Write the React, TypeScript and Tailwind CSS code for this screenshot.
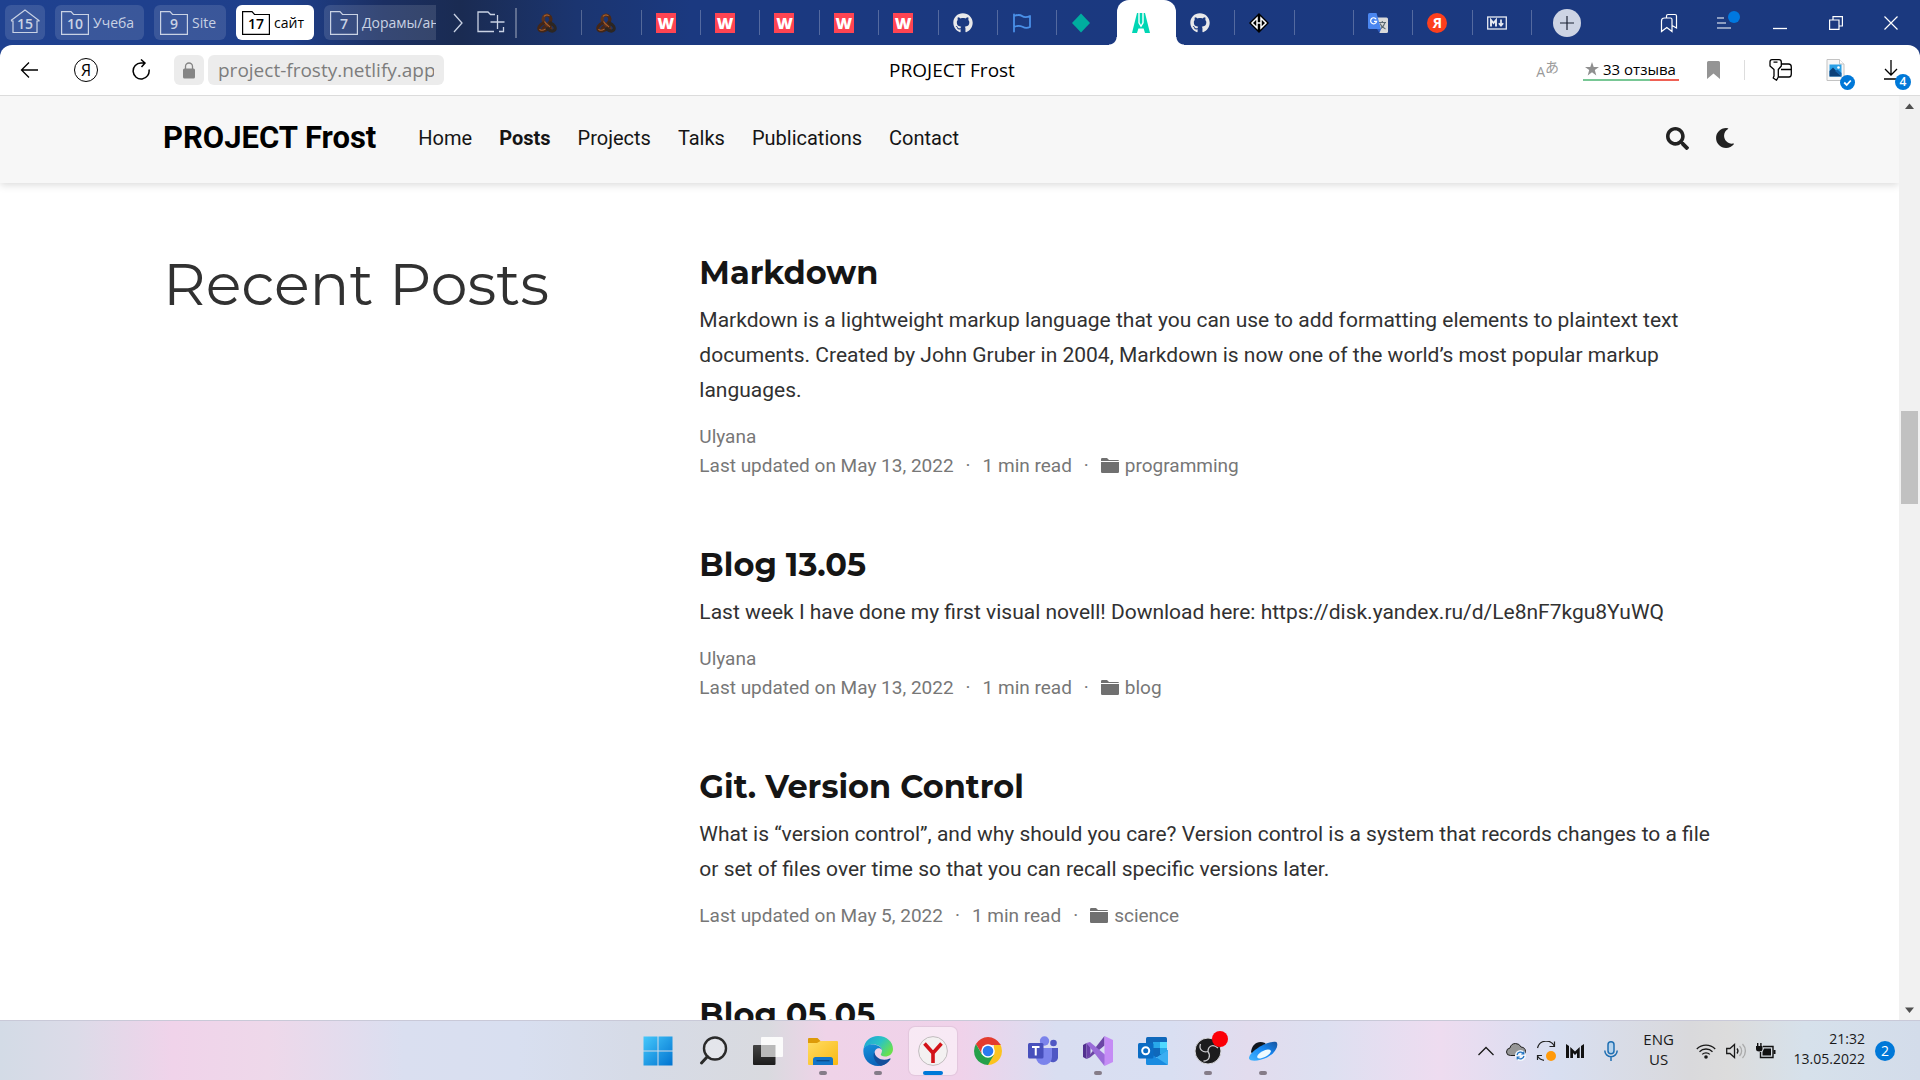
import React from "react";
import { FaGithub, FaMoon, FaSearch } from "react-icons/fa";

const UI = "font-['Open_Sans','Noto_Sans',sans-serif]";

/* ---------- favicons ---------- */

function Knot() {
  return (
    <svg viewBox="0 0 20 20" className="size-5" fill="none">
      <path d="M10 2C13 2 14.500 5 13.500 8C12.500 11 9 12.500 6 15.500" stroke="#4a2817" strokeWidth="3.200" strokeLinecap="round" />
      <path d="M10 2C7 2 5.500 5 6.500 8C7.500 11 11 12.500 14 15.500" stroke="#5c331e" strokeWidth="3.200" strokeLinecap="round" />
      <path d="M6.500 10C3 11.500 0.500 15 2.500 17.200C4.500 19 9 18 12 15C13 14 13.500 12 13 10" stroke="#442616" strokeWidth="3" strokeLinecap="round" />
      <path d="M13.500 10C17 11.500 19.500 15 17.500 17.200C15.500 19 13 18 10.500 16" stroke="#2c2622" strokeWidth="3" strokeLinecap="round" />
      <path d="M7 3.500C8 1.800 11 1.300 12.500 3M2.500 16C3.500 18 6 17.500 8.500 16M7.500 8.500C8.500 10.500 11 12 13 14" stroke="#a9602f" strokeWidth="1.100" />
    </svg>
  );
}

function WFavicon() {
  return (
    <span className="flex size-5 items-center justify-center bg-[#ff4452] text-base leading-5 font-extrabold text-white">W</span>
  );
}

function Flag() {
  return (
    <svg viewBox="0 0 20 20" className="size-5" fill="none" stroke="#4a90e8" strokeWidth="1.800" strokeLinejoin="round" strokeLinecap="round">
      <path d="M2 1.500V18.500M2 3C6 1.500 8 1.500 10 3C12 4.500 15 4.500 18 3V14C15 15.500 12.500 15 10.500 13.800C8 12.500 5 12.500 2 14" />
    </svg>
  );
}

function Diamond() {
  return (
    <svg viewBox="0 0 20 20" className="size-5">
      <path d="M10 0.500L19 10L10 19.500L1 10Z" fill="#00ad9f" />
    </svg>
  );
}

function FrostMark() {
  return (
    <svg viewBox="0 0 20 20" className="size-5">
      <path d="M6 0H14L19 20H14L12.600 15.500H7.400L6 20H1Z" fill="#00d6b4" />
      <path d="M7.300 0H8.700V9.500L10 12L11.300 9.500V0H12.700V10L10 14.500L7.300 10Z" fill="#fff" />
    </svg>
  );
}

function HDiamond() {
  return (
    <svg viewBox="0 0 20 20" className="size-5">
      <path d="M10 0L20 10L10 20L0 10Z" fill="#000" />
      <path d="M8 5V15L3 10ZM12 5V15L17 10Z" fill="none" stroke="#fff" strokeWidth="1.500" />
      <path d="M8 10H12" stroke="#fff" strokeWidth="1.500" />
    </svg>
  );
}

function Translate() {
  return (
    <svg viewBox="0 0 20 20" className="size-5">
      <path d="M8 4.500H18.500Q20 4.500 20 6V18.500Q20 20 18.500 20H11.500Z" fill="#dadada" />
      <path d="M10.500 9.500H18M14.300 8V9.500M17 9.500C16 13 14 14.500 12.500 16M12 10.500C13 13 15 15 17.500 16" fill="none" stroke="#5d6b74" strokeWidth="1.100" />
      <path d="M1.500 0H8.500L13 16H1.500Q0 16 0 14.500V1.500Q0 0 1.500 0Z" fill="#4a86f0" />
      <path d="M9 16H13L11.500 20Z" fill="#2f5fc4" />
      <path d="M8.200 6.200A3 3 0 1 0 8.600 8.300H6" fill="none" stroke="#fff" strokeWidth="1.200" />
    </svg>
  );
}

function YaFavicon() {
  return (
    <span className="flex size-5 items-center justify-center rounded-full bg-[#fc3f1d] text-sm leading-5 font-bold text-white">Я</span>
  );
}

function MdFavicon() {
  return (
    <svg viewBox="0 0 20 20" className="size-5" fill="none" stroke="#e8ebf2">
      <rect x="0.700" y="4" width="18.600" height="12" strokeWidth="1.300" />
      <path d="M4 13.500V7L6.500 10L9 7V13.500" strokeWidth="1.900" />
      <path d="M14 6.500V12.500M11.800 10.300L14 12.800L16.200 10.300" strokeWidth="1.700" />
    </svg>
  );
}

type Tab = { title: string; icon: React.ReactNode; active?: boolean; divider?: boolean };

const gh = <FaGithub className="size-5 text-[#e9e9ea]" />;

const tabs: Tab[] = [
  { title: "Knot", icon: <Knot />, divider: true },
  { title: "Knot 2", icon: <Knot />, divider: true },
  { title: "W 1", icon: <WFavicon />, divider: true },
  { title: "W 2", icon: <WFavicon />, divider: true },
  { title: "W 3", icon: <WFavicon />, divider: true },
  { title: "W 4", icon: <WFavicon />, divider: true },
  { title: "W 5", icon: <WFavicon />, divider: true },
  { title: "GitHub", icon: gh, divider: true },
  { title: "Flag", icon: <Flag />, divider: true },
  { title: "Netlify", icon: <Diamond /> },
  { title: "PROJECT Frost", icon: <FrostMark />, active: true },
  { title: "GitHub 2", icon: gh, divider: true },
  { title: "Hugo", icon: <HDiamond />, divider: true },
  { title: "New tab", icon: null, divider: true },
  { title: "Translate", icon: <Translate />, divider: true },
  { title: "Yandex", icon: <YaFavicon />, divider: true },
  { title: "Markdown", icon: <MdFavicon />, divider: true },
];

/* ---------- tab strip ---------- */

function FolderOutline({ count }: { count: string }) {
  return (
    <span className="relative flex h-6 w-7 shrink-0 items-center justify-center pt-0.5 text-sm leading-5 font-semibold">
      <svg viewBox="0 0 28 24" className="absolute inset-0 h-6 w-7" fill="none" stroke="currentColor" strokeWidth="1.200">
        <path d="M0.600 23.400V0.600H10L12.500 3.500H27.400V23.400Z" />
      </svg>
      {count}
    </span>
  );
}

function TabGroup({ count, label, width, active }: { count: string; label: string; width: string; active?: boolean }) {
  return (
    <button
      className={`flex h-[35px] shrink-0 items-center gap-1 overflow-hidden rounded-md pl-1.5 text-left text-sm whitespace-nowrap ${width} ${
        active ? "bg-white text-black" : "bg-white/12 text-[#c9d2e4]"
      }`}
    >
      <FolderOutline count={count} />
      <span>{label}</span>
    </button>
  );
}

function TabStrip() {
  return (
    <div className="flex h-[45px] shrink-0 items-stretch">
      <div className="flex shrink-0 items-center text-[#c9d2e4]">
        <button aria-label="Home, 15 tabs" className="relative ml-[5px] flex h-[35px] w-10 items-center justify-center rounded-md bg-white/12 pt-0.5 text-sm font-semibold">
          <svg viewBox="0 0 40 35" className="absolute inset-0 h-[35px] w-10" fill="none" stroke="currentColor" strokeWidth="1.200">
            <path d="M6 15.500L20 5L34 15.500V16H32V27.500H8V16H6" />
          </svg>
          15
        </button>
        <div className="ml-2.5 flex gap-2.5">
          <TabGroup count="10" label="Учеба" width="w-[89px]" />
          <TabGroup count="9" label="Site" width="w-[72px]" />
          <TabGroup count="17" label="сайт" width="w-[78px]" active />
          <TabGroup count="7" label="Дорамы/аниме" width="w-[112px] rounded-r-none" />
        </div>
        <button aria-label="More groups" className="ml-[17px]">
          <svg viewBox="0 0 10 20" className="h-5 w-2.5" fill="none" stroke="currentColor" strokeWidth="1.300"><path d="M1 1L9 10L1 19" /></svg>
        </button>
        <button aria-label="New group" className="ml-3.5">
          <svg viewBox="0 0 28 24" className="h-6 w-7" fill="none" stroke="currentColor" strokeWidth="1.300">
            <path d="M18 3.500H13.500L11 1H1V20.500H17M26.500 16V20.500H22M20.500 4V18M13.500 11H27.500" />
          </svg>
        </button>
        <span className="ml-2.5 h-[30px] w-0.5 bg-white/30" />
      </div>
      <div className="ml-1.5 flex min-w-0 flex-1">
        {tabs.map((t) => (
          <button
            key={t.title}
            aria-label={t.title}
            className={`relative flex min-w-0 flex-1 items-center pl-3.5 ${t.active ? "rounded-t-xl bg-white" : ""}`}
          >
            {t.icon}
            {t.divider && <span className="absolute top-2.5 right-0 h-[25px] w-px bg-white/25" />}
            {t.active && (
              <>
                <span className="absolute bottom-0 -left-2 size-2 bg-[radial-gradient(circle_at_0_0,transparent_7px,white_8px)]" />
                <span className="absolute -right-2 bottom-0 size-2 bg-[radial-gradient(circle_at_100%_0,transparent_7px,white_8px)]" />
              </>
            )}
          </button>
        ))}
      </div>
      <div className="flex w-[388px] shrink-0 items-center pl-[21px] text-white">
        <button aria-label="New tab" className="flex size-7 items-center justify-center rounded-full bg-[#cdd4e4] text-[#1b2233]">
          <svg viewBox="0 0 14 14" className="size-3.5" fill="none" stroke="currentColor" strokeWidth="1.200"><path d="M7 0V14M0 7H14" /></svg>
        </button>
        <div className="ml-auto flex items-center">
          <button aria-label="Collections" className="flex w-[54px] justify-center">
            <svg viewBox="0 0 18 20" className="h-5 w-[18px]" fill="none" stroke="currentColor" strokeWidth="1.200">
              <path d="M1.500 18.500V8Q1.500 5 4.500 5H10.500Q12 5 12 6.500V18.500L6.800 14.500ZM6.500 5V3Q6.500 1.500 8 1.500H15Q16.500 1.500 16.500 3V15L12 12.500" />
            </svg>
          </button>
          <button aria-label="Menu" className="relative flex w-14 justify-center">
            <svg viewBox="0 0 14 12" className="h-3 w-3.5" fill="none" stroke="currentColor" strokeWidth="1.200"><path d="M0 1H7M0 6H9M0 11H14" /></svg>
            <span className="absolute -top-1.5 right-3 size-3 rounded-full bg-[#0078e0]" />
          </button>
          <button aria-label="Minimize" className="flex w-14 justify-center">
            <svg viewBox="0 0 14 14" className="size-3.5" fill="none" stroke="currentColor" strokeWidth="1.300"><path d="M0 12.500H14" /></svg>
          </button>
          <button aria-label="Restore" className="flex w-[55px] justify-center">
            <svg viewBox="0 0 14 14" className="size-3.5" fill="none" stroke="currentColor" strokeWidth="1.200"><path d="M0.600 4H10V13.400H0.600ZM4 4V0.600H13.400V10H10" /></svg>
          </button>
          <button aria-label="Close" className="mr-0.5 flex w-[55px] justify-center">
            <svg viewBox="0 0 14 14" className="size-3.5" fill="none" stroke="currentColor" strokeWidth="1.200"><path d="M0.500 0.500L13.500 13.500M13.500 0.500L0.500 13.500" /></svg>
          </button>
        </div>
      </div>
    </div>
  );
}

/* ---------- address bar ---------- */

function AddressBar() {
  return (
    <div className="grid h-[51px] shrink-0 grid-cols-[1fr_auto_1fr] items-center rounded-t-xl border-b border-[#dcdcdc] bg-white pr-4 text-black">
      <div className="flex items-center">
        <button aria-label="Back" className="ml-5">
          <svg viewBox="0 0 18 18" className="size-[18px]" fill="none" stroke="currentColor" strokeWidth="1.300"><path d="M18 9H1.500M9 1.500L1.500 9L9 16.500" /></svg>
        </button>
        <button aria-label="Yandex" className="ml-9 flex size-6 items-center justify-center rounded-full border border-black text-base leading-5">Я</button>
        <button aria-label="Reload" className="ml-8">
          <svg viewBox="0 0 22 22" className="size-[22px]" fill="none" stroke="currentColor" strokeWidth="1.500"><path d="M19 10.500A8 8 0 1 1 11 4H15M11 0.500L15 4L11.500 8" /></svg>
        </button>
        <button aria-label="Site security" className="ml-[22px] flex h-[30px] w-[30px] items-center justify-center rounded-md bg-[#ececec]">
          <svg viewBox="0 0 12 17" className="h-[17px] w-3"><path d="M2.500 8V4.500A3.500 3.500 0 0 1 9.500 4.500V8" fill="none" stroke="#858585" strokeWidth="1.300" /><rect y="6.500" width="12" height="10" rx="1.500" fill="#858585" /></svg>
        </button>
        <input
          aria-label="Address"
          defaultValue="project-frosty.netlify.app"
          className="ml-1 h-[30px] w-[236px] rounded-md bg-[#ececec] px-2.5 text-[19px] text-[#7d7d7d]"
        />
      </div>
      <div className="text-[19px]">PROJECT Frost</div>
      <div className="flex items-center justify-end">
        <button aria-label="Translate page" className="flex text-[#9a9a9a]">
          <span className="mt-1 text-sm leading-4">A</span>
          <span className="font-['Noto_Sans_CJK_JP'] text-sm leading-3">あ</span>
        </button>
        <button className="relative ml-6 flex w-24 items-center gap-1 pb-0.5 pl-0.5 text-[15px] leading-6 whitespace-nowrap">
          <svg viewBox="0 0 14 14" className="size-3.5 shrink-0" fill="#8f8f8f"><path d="M7 0L8.700 4.900H14L9.800 8.100L11.300 13.500L7 10.300L2.700 13.500L4.200 8.100L0 4.900H5.300Z" /></svg>
          33 отзыва
          <span className="absolute bottom-0.5 left-0 flex h-0.5 w-full"><span className="w-[70%] bg-[#78c795]" /><span className="flex-1 bg-[#ef6155]" /></span>
        </button>
        <button aria-label="Bookmark" className="ml-7">
          <svg viewBox="0 0 13 18" className="h-[18px] w-[13px]" fill="#949494"><path d="M1.500 0H11.500Q13 0 13 1.500V18L6.500 12.500L0 18V1.500Q0 0 1.500 0Z" /></svg>
        </button>
        <span className="ml-6 h-5 w-px bg-[#dddddd]" />
        <button aria-label="Passwords" className="ml-6">
          <svg viewBox="0 0 23 22" className="h-[22px] w-[23px]" fill="none" stroke="currentColor" strokeWidth="1.300" strokeLinejoin="round">
            <path d="M3 0.700H10Q12.300 0.700 12.300 3V7L9.300 10.500V18L7.500 21.300L4.200 19L5 17V10.500L1 7V3Q1 0.700 3 0.700ZM4.500 3.200H8.500" />
            <path d="M12.300 5H19.500Q22.300 5 22.300 8V15Q22.300 18 20 18H9.500M12 10.500H22" />
          </svg>
        </button>
        <button aria-label="Saved picture" className="relative ml-[34px] flex w-7 justify-start">
          <svg viewBox="0 0 19 22" className="h-[22px] w-[19px]">
            <path d="M1 0.500H13.500L18 5V21.500H1Z" fill="#f7f7f7" stroke="#c3c3c3" />
            <path d="M13.500 0.500V5H18" fill="#fff" stroke="#c3c3c3" />
            <rect x="3.500" y="5.500" width="12" height="12" fill="#2aa0e6" />
            <path d="M3.500 12L7 8.500L15.500 17.500H3.500Z" fill="#0b3f78" /><path d="M9 12L11.500 10.500L15.500 14V17.500Z" fill="#1464ad" /><circle cx="12.500" cy="8.500" r="1.300" fill="#fff" />
          </svg>
          <span className="absolute top-4 left-3.5 size-[15px] rounded-full bg-[#0078d8]">
            <svg viewBox="0 0 15 15" className="size-[15px]" fill="none" stroke="#fff" strokeWidth="1.800"><path d="M4.200 7.500L6.700 10L10.800 5.500" /></svg>
          </span>
        </button>
        <button aria-label="Downloads, 4" className="relative ml-[30px] w-5">
          <svg viewBox="0 0 14 20" className="h-5 w-3.5" fill="none" stroke="currentColor" strokeWidth="1.300"><path d="M7 0V15M1 9L7 15L13 9M0 19H14" /></svg>
          <span className="absolute top-3.5 left-[11px] flex size-4 items-center justify-center rounded-full bg-[#0078d8] text-xs leading-4 font-semibold text-white">4</span>
        </button>
      </div>
    </div>
  );
}

/* ---------- site ---------- */

const links = ["Home", "Posts", "Projects", "Talks", "Publications", "Contact"];

function SiteNav() {
  return (
    <header className="relative z-10 h-[87px] shrink-0 bg-[#f7f7f7] shadow-[0_2px_8px_rgba(0,0,0,0.15)]">
      <div className="mx-auto flex h-[84px] max-w-[1609px] items-center px-[18px]">
        <a href="#home" className="text-[31px] leading-10 font-bold text-black">PROJECT Frost</a>
        <nav className="ml-[42px] flex gap-[27px] text-xl">
          {links.map((l) => (
            <a key={l} href={`#${l}`} className={l === "Posts" ? "font-bold text-[#151515]" : "text-[#151515]"}>{l}</a>
          ))}
        </nav>
        <div className="ml-auto flex items-center gap-[26px] pr-px text-[#222]">
          <button aria-label="Search"><FaSearch className="size-[23px]" /></button>
          <button aria-label="Theme"><FaMoon className="size-5" /></button>
        </div>
      </div>
    </header>
  );
}

type Post = { title: string; text?: string; author?: string; date?: string; category?: string };

const posts: Post[] = [
  {
    title: "Markdown",
    text: "Markdown is a lightweight markup language that you can use to add formatting elements to plaintext text documents. Created by John Gruber in 2004, Markdown is now one of the world’s most popular markup languages.",
    author: "Ulyana", date: "May 13, 2022", category: "programming",
  },
  {
    title: "Blog 13.05",
    text: "Last week I have done my first visual novell! Download here: https://disk.yandex.ru/d/Le8nF7kgu8YuWQ",
    author: "Ulyana", date: "May 13, 2022", category: "blog",
  },
  {
    title: "Git. Version Control",
    text: "What is “version control”, and why should you care? Version control is a system that records changes to a file or set of files over time so that you can recall specific versions later.",
    date: "May 5, 2022", category: "science",
  },
  { title: "Blog 05.05" },
];

function PostItem({ post }: { post: Post }) {
  return (
    <article className="mb-[65px]">
      <h3 className="font-['Montserrat','Inter',sans-serif] text-[32px] leading-10 font-bold text-[#151515]">
        <a href="#post">{post.title}</a>
      </h3>
      {post.text && <p className="mt-2.5 text-[21px] leading-[35px] text-[#313131]">{post.text}</p>}
      {post.date && (
        <div className="mt-3.5 text-[19px] leading-[29px] text-[#777]">
          {post.author && <div>{post.author}</div>}
          <div className="flex items-center">
            <span>Last updated on {post.date}</span>
            <span className="mx-3">·</span>
            <span>1 min read</span>
            <span className="mx-3">·</span>
            <svg viewBox="0 0 18 15" className="h-[15px] w-[18px]" fill="#707070"><path d="M0 1.200Q0 0 1.200 0H6L8 2H16.800Q18 2 18 3H0ZM0 4H18V13.800Q18 15 16.800 15H1.200Q0 15 0 13.800Z" /></svg>
            <a href={`#${post.category}`} className="ml-1.5">{post.category}</a>
          </div>
        </div>
      )}
    </article>
  );
}

function Site() {
  return (
    <div className="flex min-h-0 flex-1 bg-white">
      <div className="flex min-w-0 flex-1 flex-col overflow-hidden font-['Roboto',sans-serif]">
        <SiteNav />
        <main className="min-h-0 flex-1 overflow-hidden">
          <div className="mx-auto flex max-w-[1609px] pt-[70px]">
            <div className="w-1/3 px-[18px]">
              <h1 className="font-['Montserrat','Inter',sans-serif] text-[59px] leading-[62px] font-normal text-[#313131]">Recent Posts</h1>
            </div>
            <div className="w-2/3 pr-11 pl-[18px]">
              {posts.map((p) => <PostItem key={p.title} post={p} />)}
            </div>
          </div>
        </main>
      </div>
      <div className="flex w-[21px] shrink-0 flex-col items-center bg-[#f1f1f1]">
        <svg viewBox="0 0 21 20" className="h-5 w-[21px]" fill="#505050"><path d="M10.500 7.500L15 13H6Z" /></svg>
        <div className="flex w-full flex-1 flex-col items-center">
          <div className="h-1/3" />
          <div className="h-[93px] w-[17px] bg-[#c1c1c1]" />
        </div>
        <svg viewBox="0 0 21 20" className="h-5 w-[21px]" fill="#505050"><path d="M10.500 13L15 7.500H6Z" /></svg>
      </div>
    </div>
  );
}

/* ---------- taskbar ---------- */

const I = "size-[30px]";

const Windows = () => (
  <svg viewBox="0 0 30 30" className={I}>
    <defs><linearGradient id="win" x2="1" y2="1"><stop stopColor="#45c8fb" /><stop offset="1" stopColor="#0173d0" /></linearGradient></defs>
    <path d="M0.500 0.500H14.500V14.500H0.500ZM15.500 0.500H29.500V14.500H15.500ZM0.500 15.500H14.500V29.500H0.500ZM15.500 15.500H29.500V29.500H15.500Z" fill="url(#win)" />
  </svg>
);
const Search = () => (
  <svg viewBox="0 0 30 30" className={I} fill="none" stroke="#2a2a2a" strokeLinecap="round">
    <circle cx="17" cy="12.500" r="11" strokeWidth="2.400" fill="#ffffff" fillOpacity="0.300" /><path d="M9.500 20.500L3.500 27" strokeWidth="3" />
  </svg>
);
const TaskView = () => (
  <svg viewBox="0 0 30 30" className={I}>
    <defs><linearGradient id="tv" x2="0" y2="1"><stop stopColor="#444" /><stop offset="1" stopColor="#1c1c1c" /></linearGradient></defs>
    <rect x="0" y="9" width="22.500" height="20" rx="1" fill="url(#tv)" /><rect x="8" y="1" width="22" height="20" rx="1" fill="#fbfbfb" /><rect x="8" y="9" width="14.500" height="12" fill="#b9b9b9" />
  </svg>
);
const Explorer = () => (
  <svg viewBox="0 0 30 30" className={I}>
    <defs><linearGradient id="ex" x2="1" y2="1"><stop stopColor="#ffdc63" /><stop offset="1" stopColor="#f9b913" /></linearGradient></defs>
    <path d="M0 3Q0 2 1 2H9.500L12.500 5H20V9H0Z" fill="#dd9a09" />
    <path d="M0 7H9L12.500 5H29Q30 5 30 6V28Q30 29 29 29H1Q0 29 0 28Z" fill="url(#ex)" />
    <path d="M5 29V23.500Q5 21 7.500 21H22.500Q25 21 25 23.500V29Z" fill="#1275c8" /><path d="M8.500 24.700H21.500" stroke="#0b4b8a" strokeWidth="1.300" />
  </svg>
);
const Edge = () => (
  <svg viewBox="0 0 30 30" className={I}>
    <defs>
      <linearGradient id="eg" x2="1" y2="0.600"><stop stopColor="#1c9fd8" /><stop offset="0.550" stopColor="#2bc3c4" /><stop offset="1" stopColor="#6ae04e" /></linearGradient>
      <linearGradient id="eb" x2="0.400" y2="1"><stop stopColor="#1793dc" /><stop offset="1" stopColor="#0a62b8" /></linearGradient>
    </defs>
    <path d="M0.500 13C1.500 5 7.500 0 15 0C24 0 30 6 30 13C30 18 26 20.500 22 20.500C19 20.500 17.800 19.500 17.800 18.600C17.800 17.800 19 17 19 14.500C19 11 15 8.500 10.500 8.500C5 8.500 1.500 11 0.500 13Z" fill="url(#eg)" />
    <path d="M0.500 13C1.500 10 6 8 10.500 8.500C15 9 19 11.500 19 14C17 10.500 11 12 11.500 18C12 25 20 28 26 24.500C23.500 28 19.500 30 15 30C6 30-0.800 22 0.500 13Z" fill="url(#eb)" />
    <path d="M11.500 16C9 20 12 27 17.500 29.700C22 29 25.500 26.500 27.500 23.200C27.900 22.500 27.500 22.200 26.800 22.500C20 25.500 12 22.500 11.500 16Z" fill="#134f9b" />
  </svg>
);
const Yandex = () => (
  <svg viewBox="0 0 30 30" className={I}>
    <circle cx="15" cy="15" r="14.400" fill="#f3f1f1" stroke="#bbb5b8" strokeWidth="0.900" />
    <path d="M6.500 7.500L15 17L23.500 7.500M15 16V27" fill="none" stroke="#d31218" strokeWidth="3.600" />
  </svg>
);
const Chrome = () => (
  <svg viewBox="0 0 30 30" className={I}>
    <path d="M2.900 8A14 14 0 0 1 27.100 8L28 9H15L9 18Z" fill="#e33b2e" />
    <path d="M27.100 8A14 14 0 0 1 15 29L14 28L21 18L21 9H27.700Z" fill="#fcc31e" />
    <path d="M2.900 8A14 14 0 0 0 15 29L21 18.500H15L9 18.500Z" fill="#25a04a" />
    <circle cx="15" cy="15" r="6.800" fill="#fff" /><circle cx="15" cy="15" r="5.300" fill="#2a7af0" />
  </svg>
);
const Teams = () => (
  <svg viewBox="0 0 30 30" className={I}>
    <circle cx="25.500" cy="7" r="3.300" fill="#4f57c4" /><path d="M20 12H30V20.500A5 5 0 0 1 20 22Z" fill="#4f57c4" />
    <circle cx="16.500" cy="5" r="4.700" fill="#7b83eb" /><path d="M8 12H24V21A8 8 0 0 1 8 21Z" fill="#7b83eb" />
    <rect x="0" y="7" width="15.500" height="15.500" rx="1.500" fill="#474fbc" />
    <path d="M4 11H11.500M7.750 11V19.500" stroke="#fff" strokeWidth="2" />
  </svg>
);
const VisualStudio = () => (
  <svg viewBox="0 0 30 30" className={I}>
    <path d="M0 9L3.500 7V23L0 21Z" fill="#52308f" />
    <path d="M3.500 7L7.500 11V19L3.500 23Z" fill="#6a3fa8" />
    <path d="M3.500 23L21.500 0V9.500L7 21.500Z" fill="#6b45a5" />
    <path d="M3.500 7L7 6L23 19.500L21.500 30Z" fill="#9a6bd8" />
    <path d="M21.500 0L30 4V26L21.500 30Z" fill="#c58cf5" />
  </svg>
);
const Outlook = () => (
  <svg viewBox="0 0 30 30" className={I}>
    <rect x="8" y="1" width="21" height="20" rx="1.500" fill="#0f68bb" /><path d="M15 6H22V12H15Z" fill="#28a8ea" /><path d="M22 6H29V12H22Z" fill="#50d9ff" /><path d="M22 12H29V18H22Z" fill="#28a8ea" />
    <path d="M8 15L18.500 21.500L30 14V27.500Q30 29 28.500 29H9.500Q8 29 8 27.500Z" fill="#1a8be0" /><path d="M18.500 21.500L30 29V14Z" fill="#3aaef2" />
    <rect x="0" y="7" width="15.500" height="15.500" rx="1.500" fill="#0b6cc4" />
    <circle cx="7.700" cy="14.700" r="3.500" fill="none" stroke="#fff" strokeWidth="2" />
  </svg>
);
const Obs = () => (
  <svg viewBox="0 0 30 30" className={I}>
    <circle cx="15" cy="15" r="13" fill="#1c1c1e" stroke="#d8d8dc" strokeWidth="1" />
    <path d="M15 15.500C10 17 5.500 13.500 7.500 8M15 15.500C15 10 20 7.500 25 12M15 15.500C18 20 16 25 10.500 25" fill="none" stroke="#c9c9cd" strokeWidth="1.300" />
  </svg>
);
const Disk = () => (
  <svg viewBox="0 0 30 30" className={I}>
    <defs><linearGradient id="dk" x1="1" x2="0" y2="1"><stop stopColor="#17539c" /><stop offset="0.450" stopColor="#1688f5" /><stop offset="1" stopColor="#46b6ff" /></linearGradient></defs>
    <path d="M3 16C4 8 10 4 17 7L20 12L6 20Z" fill="#10161f" />
    <path d="M29 7C30.500 11 26 18 19 21.500C12 25 2 26 1 22.500C0.500 19 7 13 14 9.500C20 6.500 28 4.500 29 7Z" fill="url(#dk)" />
    <ellipse cx="16" cy="18" rx="7.500" ry="3.200" transform="rotate(-27 16 18)" fill="#eefaff" />
  </svg>
);

type TaskApp = { name: string; icon: React.ReactNode; state?: "open" | "active"; dot?: boolean };

const apps: TaskApp[] = [
  { name: "Start", icon: <Windows /> },
  { name: "Search", icon: <Search /> },
  { name: "Task view", icon: <TaskView /> },
  { name: "Explorer", icon: <Explorer />, state: "open" },
  { name: "Edge", icon: <Edge />, state: "open" },
  { name: "Yandex", icon: <Yandex />, state: "active" },
  { name: "Chrome", icon: <Chrome /> },
  { name: "Teams", icon: <Teams /> },
  { name: "Visual Studio", icon: <VisualStudio />, state: "open" },
  { name: "Outlook", icon: <Outlook /> },
  { name: "OBS", icon: <Obs />, state: "open", dot: true },
  { name: "Disk", icon: <Disk />, state: "open" },
];

function Tray() {
  return (
    <div className="flex items-center text-sm text-[#1a1a1a]">
      <button aria-label="Hidden icons">
        <svg viewBox="0 0 16 10" className="h-2.5 w-4" fill="none" stroke="currentColor" strokeWidth="1.300"><path d="M0.500 9L8 1.500L15.500 9" /></svg>
      </button>
      <svg viewBox="0 0 20 20" className="ml-3 size-5">
        <path d="M4.500 14.500Q0.500 14.500 0.500 11Q0.500 7.500 4 7Q5 2.500 9.500 2.500Q13.500 2.500 15 6Q19.500 6.500 19.500 10.500Q19.500 14.500 16 14.500Z" fill="#969696" stroke="#222" strokeWidth="1" />
        <circle cx="14.500" cy="14.500" r="5.500" fill="#f2f6fb" /><path d="M11 14A3.700 3.700 0 0 1 17.500 12.500M18 15A3.700 3.700 0 0 1 11.500 16.500M17.800 10.500V13H15.300M11.200 18.500V16H13.700" fill="none" stroke="#1c6fc0" strokeWidth="1.200" />
      </svg>
      <svg viewBox="0 0 20 20" className="ml-2.5 size-5" fill="none" stroke="#222" strokeWidth="1.200">
        <path d="M1.500 7A9 9 0 0 1 18.500 5.500M18.500 0.500V5.500H13.500M8 19.300A9 9 0 0 1 1.500 15M1.500 19V14.500H6" /><circle cx="15" cy="15" r="5" fill="#ff9a0a" stroke="none" />
      </svg>
      <svg viewBox="0 0 18 16" className="ml-2.5 h-4 w-[18px]" fill="#111"><path d="M0 1L3 3V15H0ZM18 1L15 3V15H18ZM4.300 4L9 8.500L13.700 4V15H11V10L9 12L7 10V15H4.300Z" /></svg>
      <svg viewBox="0 0 14 20" className="ml-5 h-5 w-3.5" fill="none" stroke="#1f6fb2" strokeWidth="1.500"><rect x="4" y="0.800" width="6" height="12" rx="3" fill="#b7d4ee" /><path d="M0.800 9.500A6.200 6.200 0 0 0 13.200 9.500M7 15.700V20" /></svg>
      <button className="ml-[25px] w-8 pb-1 text-center text-[15px] leading-5">ENG<br />US</button>
      <svg viewBox="0 0 20 16" className="ml-[21px] h-4 w-5" fill="none" stroke="currentColor" strokeWidth="1.300">
        <path d="M0.800 6A13 13 0 0 1 19.200 6M3.500 8.700A9.200 9.200 0 0 1 16.500 8.700M6.200 11.400A5.400 5.400 0 0 1 13.800 11.400" /><circle cx="10" cy="14" r="1.800" fill="currentColor" stroke="none" />
      </svg>
      <svg viewBox="0 0 20 16" className="ml-2.5 h-4 w-5" fill="none" stroke="currentColor" strokeWidth="1.300">
        <path d="M0.700 5.500H4L8.500 1.500V14.500L4 10.500H0.700ZM11 5.500A4 4 0 0 1 11 10.500" /><path d="M13.500 3A7 7 0 0 1 13.500 13M16.500 1A10 10 0 0 1 16.500 15" stroke="#aaa" />
      </svg>
      <svg viewBox="0 0 20 16" className="ml-2.5 h-4 w-5" fill="none" stroke="#111" strokeWidth="1.400"><path d="M7 3.500H17V14.500H4.500V9" /><path d="M8 5.500H15V12.500H6.500V9Z M17.500 7H19.500V11H17.500Z" fill="#111" stroke="none" /><path d="M0 3H6.500V6Q6.500 8.500 3.200 8.500Q0 8.500 0 6ZM1 0H2.400V3H1ZM4.200 0H5.600V3H4.200Z" fill="#111" stroke="none" /></svg>
      <div className="ml-[18px] pb-1 text-right leading-5">21:32<br />13.05.2022</div>
      <button aria-label="2 notifications" className="mr-[25px] ml-2.5 flex size-5 items-center justify-center rounded-full bg-[#0078d8] text-sm leading-5 text-white">2</button>
    </div>
  );
}

function Taskbar() {
  return (
    <footer className="grid h-[60px] shrink-0 grid-cols-[1fr_auto_1fr] items-center border-t border-[#c9c9d8] bg-[linear-gradient(90deg,#d3dbe6_0%,#dcdbe8_4%,#f0d3ea_9%,#eed8ea_14%,#dadff0_21%,#d8dff0_27%,#d6dbe7_33%,#d9dadf_40%,#efd3e8_43%,#f0d2ea_50%,#d9def1_55%,#d9dff2_61%,#e2dcee_65%,#dde0f1_69%,#eedcf0_75%,#d8dff1_81%,#d9d9dc_88%,#dcdcdc_90%,#d6e1eb_94%,#d3dcea_100%)]">
      <span />
      <div className="flex gap-[7px]">
        {apps.map((a) => (
          <button
            key={a.name}
            aria-label={a.name}
            className={`relative flex size-12 items-center justify-center rounded-md ${a.state === "active" ? "bg-white/50 shadow-[0_0_1px_1px_rgba(0,0,0,0.06)]" : ""}`}
          >
            {a.icon}
            {a.dot && <span className="absolute top-1 right-1 size-4 rounded-full bg-[#fb0007]" />}
            {a.state === "open" && <span className="absolute bottom-0 h-1 w-2 rounded-full bg-[#857c88]" />}
            {a.state === "active" && <span className="absolute bottom-0 h-1 w-5 rounded-full bg-[#0078d8]" />}
          </button>
        ))}
      </div>
      <div className="flex justify-end"><Tray /></div>
    </footer>
  );
}

export default function App() {
  return (
    <div className={`flex h-screen flex-col overflow-hidden bg-[linear-gradient(90deg,#1f4190_0%,#1f3f8a_15%,#1b2f62_20%,#1a2b52_24%,#1b3570_30%,#1b3980_36%,#1b397f_100%)] ${UI}`}>
      <TabStrip />
      <AddressBar />
      <Site />
      <Taskbar />
    </div>
  );
}
